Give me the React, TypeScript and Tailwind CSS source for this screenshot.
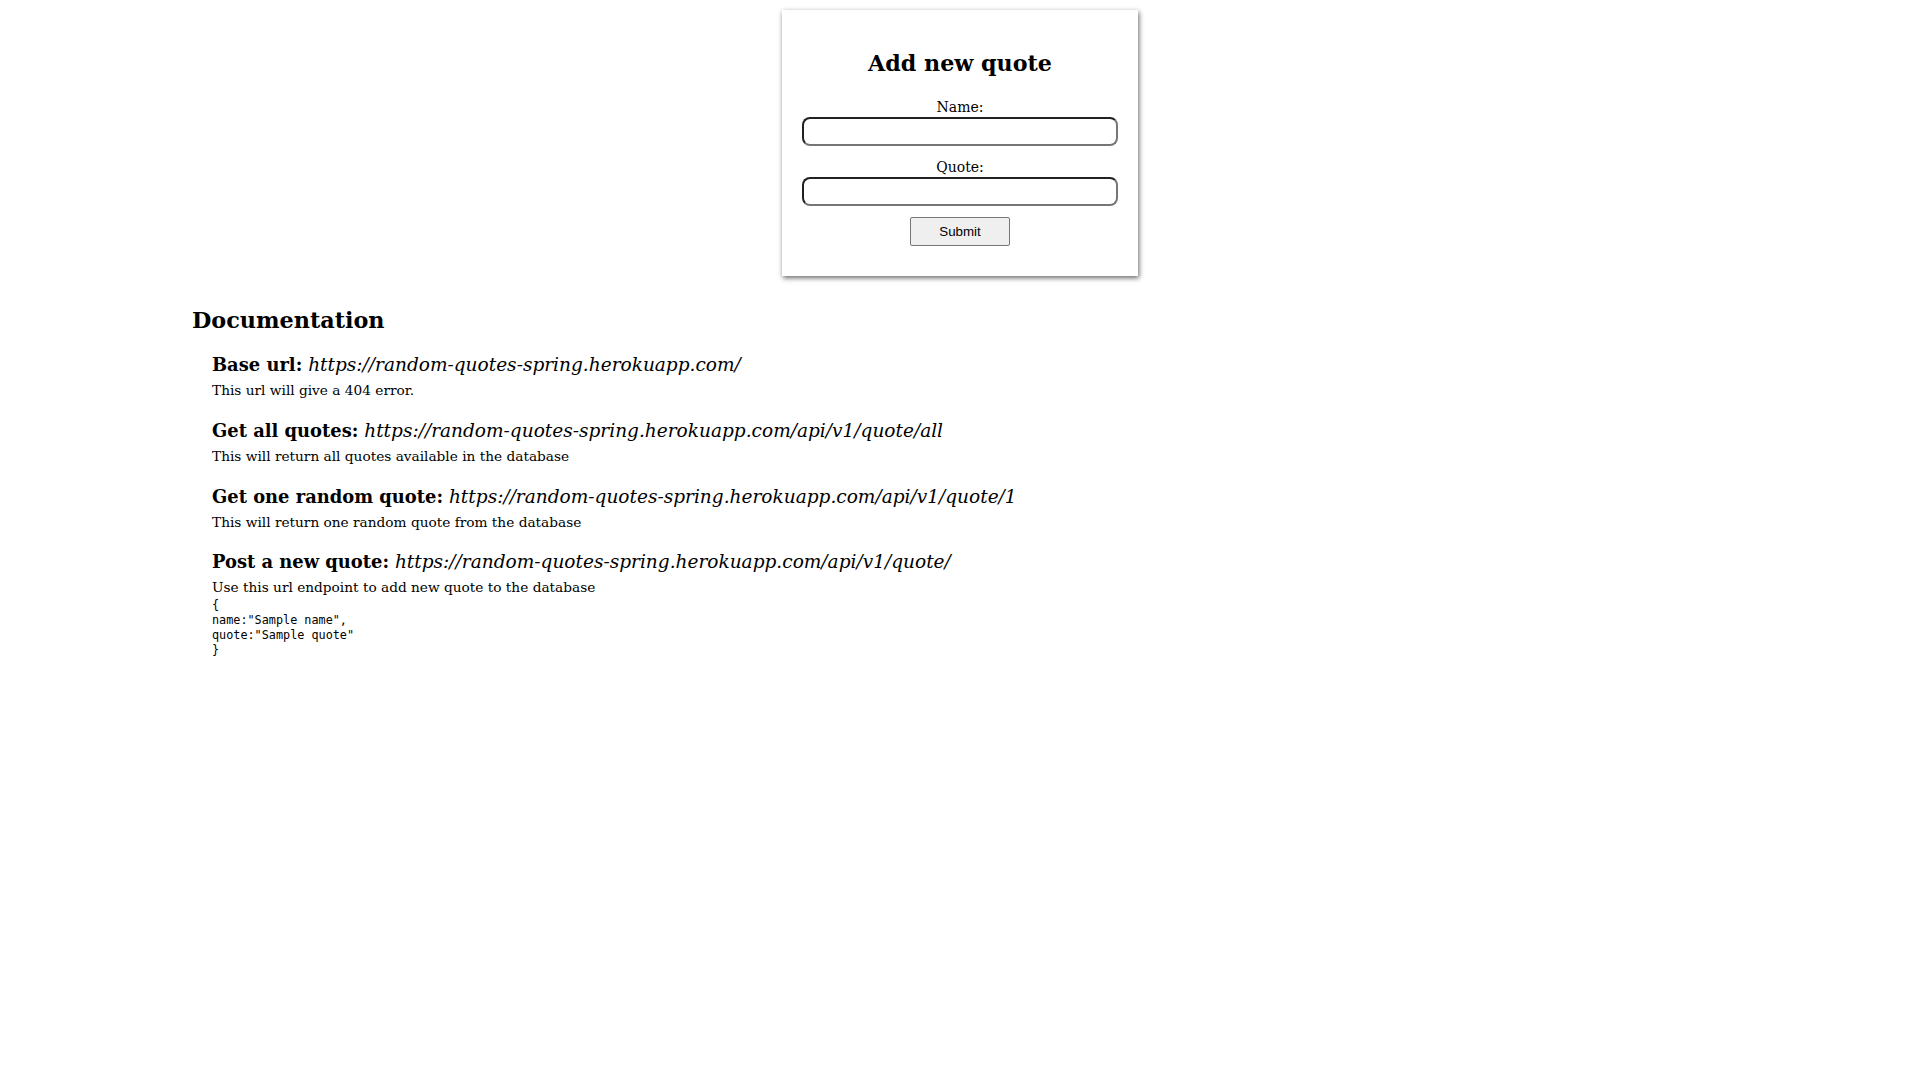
import React from "react";

const serif = "font-['DejaVu_Serif',Georgia,serif]";

const docs = [
  {
    title: "Base url:",
    url: "https://random-quotes-spring.herokuapp.com/",
    note: "This url will give a 404 error.",
  },
  {
    title: "Get all quotes:",
    url: "https://random-quotes-spring.herokuapp.com/api/v1/quote/all",
    note: "This will return all quotes available in the database",
  },
  {
    title: "Get one random quote:",
    url: "https://random-quotes-spring.herokuapp.com/api/v1/quote/1",
    note: "This will return one random quote from the database",
  },
  {
    title: "Post a new quote:",
    url: "https://random-quotes-spring.herokuapp.com/api/v1/quote/",
    note: "Use this url endpoint to add new quote to the database",
  },
];

function QuoteForm() {
  return (
    <div className="pt-[10px]">
      <form className="mx-auto w-[356px] bg-white px-5 pt-10 pb-[30px] shadow-[1px_2px_5px_rgba(0,0,0,0.6)] flex flex-col">
        <h2 className="text-center text-[22.2px] font-bold leading-[27px] mb-[21px]">
          Add new quote
        </h2>
        <label className="text-center text-[14px] leading-[18px]">Name:</label>
        <input
          type="text"
          className="mt-px h-[29px] w-full rounded-lg border-2 [border-style:inset] border-[#767676] bg-white outline-none"
        />
        <label className="mt-3 text-center text-[14px] leading-[18px]">Quote:</label>
        <input
          type="text"
          className="mt-px h-[29px] w-full rounded-lg border-2 [border-style:inset] border-[#767676] bg-white outline-none"
        />
        <button
          type="button"
          className="mx-auto mt-[11px] h-[29px] w-[100px] rounded-[2px] border border-[#767676] bg-[#efefef] font-['Liberation_Sans',Arial,sans-serif] text-[13.33px] text-black"
        >
          Submit
        </button>
      </form>
    </div>
  );
}

export default function App() {
  return (
    <div className={`min-h-screen w-full bg-white text-black ${serif}`}>
      <QuoteForm />
      <section className="ml-[192px] mt-[31px]">
        <h2 className="text-[22.3px] font-bold leading-[27px]">Documentation</h2>
        <div className="mt-[19px] pl-[20px] flex flex-col gap-[19.8px]">
          {docs.map((d, i) => (
            <div key={d.title}>
              <div className="text-[18.55px] leading-[24px] whitespace-nowrap">
                <span className="text-[17.9px] font-bold">{d.title}</span>{" "}
                <span className="italic">{d.url}</span>
              </div>
              <p className="mt-[4px] text-[13.7px] leading-[18px]">{d.note}</p>
              {i === docs.length - 1 && (
                <div className="mt-[1.5px] whitespace-pre font-['DejaVu_Sans_Mono',monospace] text-[11.8px] leading-[15px]">
                  {'{\nname:"Sample name",\nquote:"Sample quote"\n}'}
                </div>
              )}
            </div>
          ))}
        </div>
      </section>
    </div>
  );
}
